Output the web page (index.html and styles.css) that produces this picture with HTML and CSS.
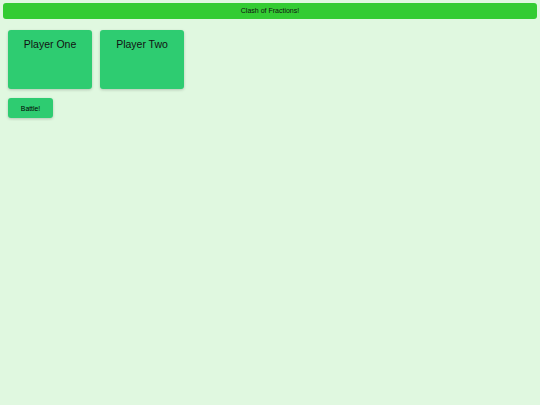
FILE: index.html
```html
<!DOCTYPE html>
<html>
<head>
<meta charset="utf-8">
<link rel="stylesheet" href="styles.css">
</head>
<body>
<div class="page">
  <header class="title-bar">Clash of Fractions!</header>
  <div class="players">
    <div class="card"><div class="card-title">Player One</div></div>
    <div class="card"><div class="card-title">Player Two</div></div>
  </div>
  <div class="actions">
    <button class="battle">Battle!</button>
  </div>
</div>
</body>
</html>
```
FILE: styles.css
```css
html, body {
  margin: 0;
  padding: 0;
  background: #e0f8e0;
  font-family: "Liberation Sans", Arial, sans-serif;
}
.page {
  padding: 3px;
}
.title-bar {
  height: 16px;
  line-height: 16px;
  background: #33cc33;
  border-radius: 3px;
  text-align: center;
  font-size: 7px;
  color: #111;
}
.players {
  display: flex;
  gap: 8px;
  margin-top: 11px;
  padding-left: 5px;
}
.card {
  width: 84px;
  height: 59px;
  background: #2ecc71;
  border-radius: 3px;
  box-shadow: 0 1px 3px rgba(0,0,0,0.2);
}
.card-title {
  text-align: center;
  font-size: 10.5px;
  margin-top: 8px;
  color: #111;
}
.actions {
  display: flex;
  margin-top: 9px;
  padding-left: 5px;
}
.battle {
  width: 45px;
  height: 20px;
  background: #2ecc71;
  border: none;
  border-radius: 3px;
  box-shadow: 0 1px 3px rgba(0,0,0,0.2);
  font-family: "Liberation Sans", Arial, sans-serif;
  font-size: 6.8px;
  font-weight: normal;
  color: #000;
  padding: 0;
}
```
